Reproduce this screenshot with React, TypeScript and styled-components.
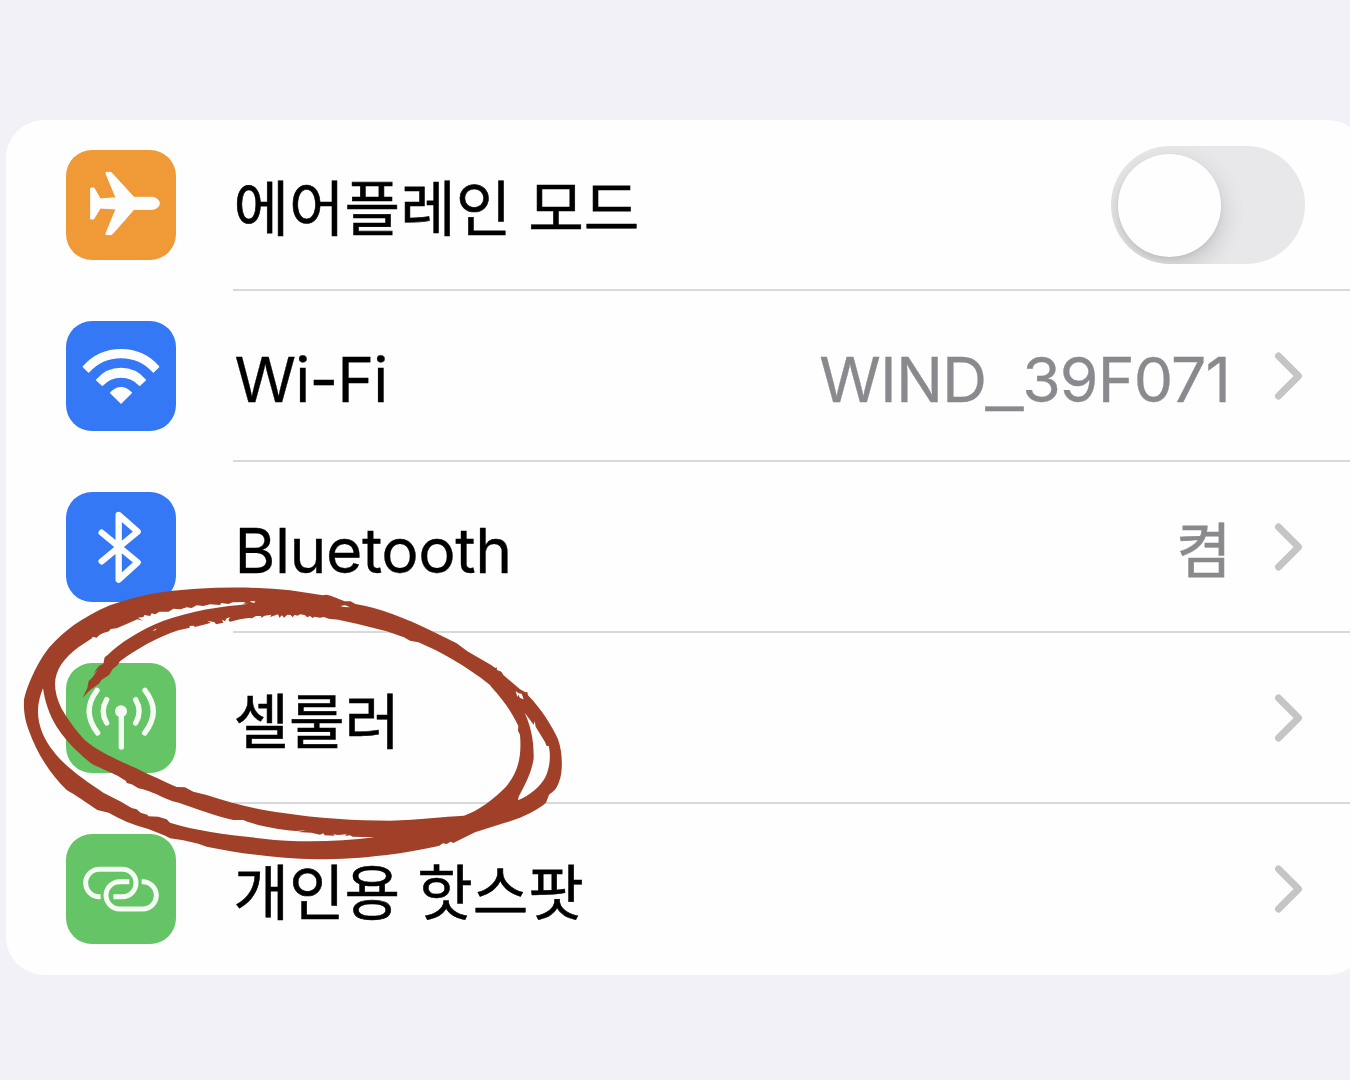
import { ReactNode, useState } from "react";
import styled, { createGlobalStyle } from "styled-components";

const GlobalStyle = createGlobalStyle`
  * {
    box-sizing: border-box;
  }

  body {
    margin: 0;
    overflow: hidden;
    background: #f2f1f7;
  }
`;

const Page = styled.main`
  position: relative;
  width: 1350px;
  height: 1080px;
  padding: 120px 0 0 6px;
  overflow: hidden;
  background: #f2f1f7;
`;

/* the card runs a little past the right side of the screen */
const Card = styled.section`
  width: 1360px;
  border-radius: 38px;
  background: #fefefe;
  overflow: hidden;
`;

const Row = styled.div`
  display: flex;
  align-items: center;
  height: 171px;
  padding-left: 60px;
`;

const IconTile = styled.div<{ $color: string }>`
  flex: none;
  width: 110px;
  height: 110px;
  margin: 0 57px 1px 0;
  border-radius: 26px;
  background: ${({ $color }) => $color};

  svg {
    display: block;
    width: 110px;
    height: 110px;
  }
`;

const RowBody = styled.div<{ $last?: boolean }>`
  display: flex;
  flex: 1;
  align-items: center;
  justify-content: space-between;
  height: 171px;
  padding: 2px 63px 0 0;
  border-bottom: 2px solid ${({ $last }) => ($last ? "transparent" : "#d9d9db")};
`;

const Text = styled.span<{ $latin?: boolean; $muted?: boolean; $spacing?: number }>`
  padding: ${({ $latin }) => ($latin ? "4px 0 0 1.5px" : "7px 0 0 0.5px")};
  font-family: Inter, "Noto Sans CJK KR", sans-serif;
  font-size: ${({ $latin }) => ($latin ? 62.5 : 60.4)}px;
  line-height: 90px;
  letter-spacing: ${({ $spacing = 0 }) => $spacing}px;
  white-space: pre;
  color: ${({ $muted }) => ($muted ? "#8a8a8e" : "#000")};
  -webkit-text-stroke: ${({ $latin }) => ($latin ? 0.3 : 0.6)}px currentColor;
`;

const Underscore = styled.span`
  font-family: "Liberation Sans", sans-serif;
  font-size: 66px;
  line-height: 0;
  vertical-align: 4px;
`;

const Trailing = styled.div`
  display: flex;
  align-items: center;
  gap: 45px;
`;

const Chevron = styled.svg`
  display: block;
  width: 28px;
  height: 48px;
  margin-bottom: 2px;
  fill: none;
  stroke: #c5c5c7;
  stroke-width: 7;
  stroke-linecap: round;
  stroke-linejoin: round;
`;

const Switch = styled.button<{ $on: boolean }>`
  display: flex;
  justify-content: ${({ $on }) => ($on ? "flex-end" : "flex-start")};
  width: 194px;
  height: 118px;
  margin: 0 -2px 1px 0;
  padding: 7.5px 7px;
  border: 0;
  border-radius: 59px;
  background: ${({ $on }) => ($on ? "#65c466" : "#e8e8ea")};
  overflow: hidden;
`;

const Knob = styled.span`
  width: 103px;
  height: 103px;
  border-radius: 50%;
  background: #fefefe;
  box-shadow: 0 9px 24px rgba(0, 0, 0, 0.17), 0 2px 4px rgba(0, 0, 0, 0.05);
`;

/* brush circle lying over the list */
const Marker = styled.svg`
  position: absolute;
  left: 10px;
  top: 580px;
  width: 570px;
  height: 290px;
  pointer-events: none;
`;

const PlaneIcon = () => (
  <svg viewBox="48 30 330 330" fill="#fefefe" stroke="#fefefe" strokeWidth="3" strokeLinejoin="round">
    <path d="M122 144H132L151 177L198 173L168 101Q166 97 171 97H180Q184 97 187 101L252 172H307C320 173 328 182 328 190C328 199 320 207 307 208H252L188 281Q185 284 181 284H171Q166 284 168 280L198 207L151 204L131 237H122Z" />
  </svg>
);

const WifiIcon = () => (
  <svg viewBox="48 33 330 330" fill="#fefefe" stroke="#fefefe" strokeWidth="4" strokeLinejoin="round">
    <path d="M100 170A151 151 0 0 1 326 170L310 186A130 130 0 0 0 116 186Z" />
    <path d="M140 210A94 94 0 0 1 286 210L269 226A75 75 0 0 0 157 226Z" />
    <path d="M182 248Q213 218 244 248L213 279Z" />
  </svg>
);

const BluetoothIcon = () => (
  <svg
    viewBox="48 36 330 330"
    fill="none"
    stroke="#fefefe"
    strokeWidth="19"
    strokeLinecap="round"
    strokeLinejoin="round"
  >
    <path d="M155 158L263 247L206 299V105L263 155L155 244" />
  </svg>
);

const CellularIcon = () => (
  <svg viewBox="168 248 330 330" fill="none" stroke="#f4fcf4" strokeWidth="16" strokeLinecap="round">
    <path d="M334 395V500" />
    <circle cx="333" cy="393" r="18" fill="#f4fcf4" stroke="none" />
    <path d="M290 358Q269 393 290 428M377 358Q398 393 377 428" />
    <path d="M261 330Q213 393 263 458M405 330Q455 393 404 458" />
  </svg>
);

const HotspotIcon = () => (
  <svg viewBox="48 26 330 330" fill="none" stroke="#f4fcf4" strokeWidth="15">
    <path d="M152 214H148A41 41 0 0 1 148 132H217A41 41 0 0 1 217 214H190" />
    <path d="M238 169H209A41 41 0 0 0 209 251H278A41 41 0 0 0 278 169H275" />
  </svg>
);

const Arrow = () => (
  <Chevron viewBox="0 0 28 48">
    <path d="M3.5 4L23.5 24L3.5 44" />
  </Chevron>
);

const BRUSH_OUTLINE =
  "M42 358L40 366L46 342C60 298 86 242 118 202C160 155 215 112 300 76C380 46 460 32 560 26C660 20 760 22 840 31L900 40L938 46L950 44L962 47L985 56L1004 64L1022 64L1036 72C1110 84 1180 112 1270 155L1340 190L1372 214L1442 254L1456 264L1460 262L1461 270L1474 275L1480 285L1530 328L1546 337L1552 336L1554 346C1595 388 1626 438 1644 478C1656 510 1658 555 1653 584C1648 608 1640 626 1630 634L1617 644L1608 668C1580 692 1540 712 1480 730L1395 757L1342 783L1330 789L1322 785L1310 792L1298 790L1288 797C1200 818 1060 838 920 838C800 836 690 820 590 800L565 791L520 781L480 775L466 767L415 747C370 735 330 718 296 698L262 690C230 668 195 644 170 630C125 588 80 520 56 450C42 410 41 385 42 358Z";

const BRUSH_INNER =
  "M135 312C136 270 160 236 205 202L246 175L248 170L260 173L268 165L280 159L297 154L302 147L320 145L350 132L382 118L398 122L384 113L400 111L403 105L420 108L425 100L436 103L448 95L476 95L490 86L512 88L530 82L545 84L560 76L580 78L600 73L630 75L634 69L655 72L668 67L706 66L700 71L715 71L690 75C600 82 500 104 432 134C385 155 330 188 294 224L284 232L280 251L268 257L259 268L250 282L264 268L248 292L236 303L232 324L218 353L240 330L256 319L268 310L274 300L298 284L308 267L322 256L330 244C382 206 442 172 505 151L540 143L538 138L552 137L554 141L590 132L602 128L592 122L614 127L618 133L640 128L636 119L645 124L650 115L660 112L655 121L660 125L690 118L715 114L726 115L738 108L754 108L752 114L764 107L784 104L780 111L796 106L804 103L808 113L816 106L822 113L832 104L842 105L848 112L854 104L862 107L870 103L884 105L892 112L900 108L908 114L914 110L930 113L942 111L956 116L985 119L1005 124L1040 131L1130 154L1182 172L1200 182L1225 187C1290 214 1370 259 1440 315L1446 323C1485 365 1508 402 1525 438L1524 452L1530 464C1536 535 1522 580 1488 620C1450 659 1405 692 1362 707C1300 710 1230 719 1140 722C1040 722 920 715 820 699C730 687 660 668 590 645L550 635L525 622L500 621C450 599 390 570 335 545C296 527 256 508 224 480C200 454 174 420 154 385C142 360 135 335 135 312Z";

const BRUSH_SLIVERS =
  "M99 325C91 345 84 370 84 395C84 435 101 478 132 516C165 560 230 605 280 638L333 665L365 684L380 688L392 698L412 704L415 709L445 710L470 718L480 728C560 753 660 765 760 776C860 788 980 786 1094 772L1028 770L1020 766L1005 768L1010 763L984 765L970 763L974 767L944 766L940 760L930 764L904 758L862 756L888 751L858 753C790 747 735 735 700 720L670 720C620 708 565 689 506 668L488 664L465 655C430 637 400 627 385 625L365 613L350 609L348 603L324 588C290 572 266 562 246 552C212 524 172 490 140 440C116 402 104 360 99 325Z" +
  "M1544 398L1571 434L1574 423L1577 440L1605 486L1610 498L1616 498C1623 525 1620 562 1606 592C1590 621 1560 646 1524 661L1526 650C1550 606 1566 572 1571 535C1572 480 1562 438 1544 398Z";

const BRUSH_SPECKS =
  "M991 78L1006 76L1020 82L1001 81ZM1517 333L1526 340L1535 341L1541 358L1530 354L1525 344L1522 351ZM427 152L438 146L439 150ZM720 63L736 64L733 69L724 67Z";

const BrushCircle = () => (
  <Marker viewBox="0 0 1710 870">
    <path fill="#a04028" fillRule="evenodd" d={BRUSH_OUTLINE + BRUSH_INNER + BRUSH_SLIVERS + BRUSH_SPECKS} />
  </Marker>
);

type SettingRowProps = {
  color: string;
  icon: ReactNode;
  label: ReactNode;
  last?: boolean;
  children: ReactNode;
};

const SettingRow = ({ color, icon, label, last, children }: SettingRowProps) => (
  <Row>
    <IconTile $color={color}>{icon}</IconTile>
    <RowBody $last={last}>
      {label}
      <Trailing>{children}</Trailing>
    </RowBody>
  </Row>
);

export default function App() {
  const [airplane, setAirplane] = useState(false);

  return (
    <Page>
      <GlobalStyle />
      <Card>
        <SettingRow color="#f09a37" icon={<PlaneIcon />} label={<Text>에어플레인 모드</Text>}>
          <Switch $on={airplane} role="switch" aria-checked={airplane} onClick={() => setAirplane(!airplane)}>
            <Knob />
          </Switch>
        </SettingRow>
        <SettingRow color="#3478f6" icon={<WifiIcon />} label={<Text $latin $spacing={-0.9}>Wi-Fi</Text>}>
          <Text $latin $muted $spacing={-0.9}>
            WIND<Underscore>_</Underscore>39F071
          </Text>
          <Arrow />
        </SettingRow>
        <SettingRow color="#3478f6" icon={<BluetoothIcon />} label={<Text $latin $spacing={-0.5}>Bluetooth</Text>}>
          <Text $muted $spacing={-1.5}>켬</Text>
          <Arrow />
        </SettingRow>
        <SettingRow color="#65c466" icon={<CellularIcon />} label={<Text>셀룰러</Text>}>
          <Arrow />
        </SettingRow>
        <SettingRow color="#65c466" icon={<HotspotIcon />} label={<Text>개인용 핫스팟</Text>} last>
          <Arrow />
        </SettingRow>
      </Card>
      <BrushCircle />
    </Page>
  );
}
